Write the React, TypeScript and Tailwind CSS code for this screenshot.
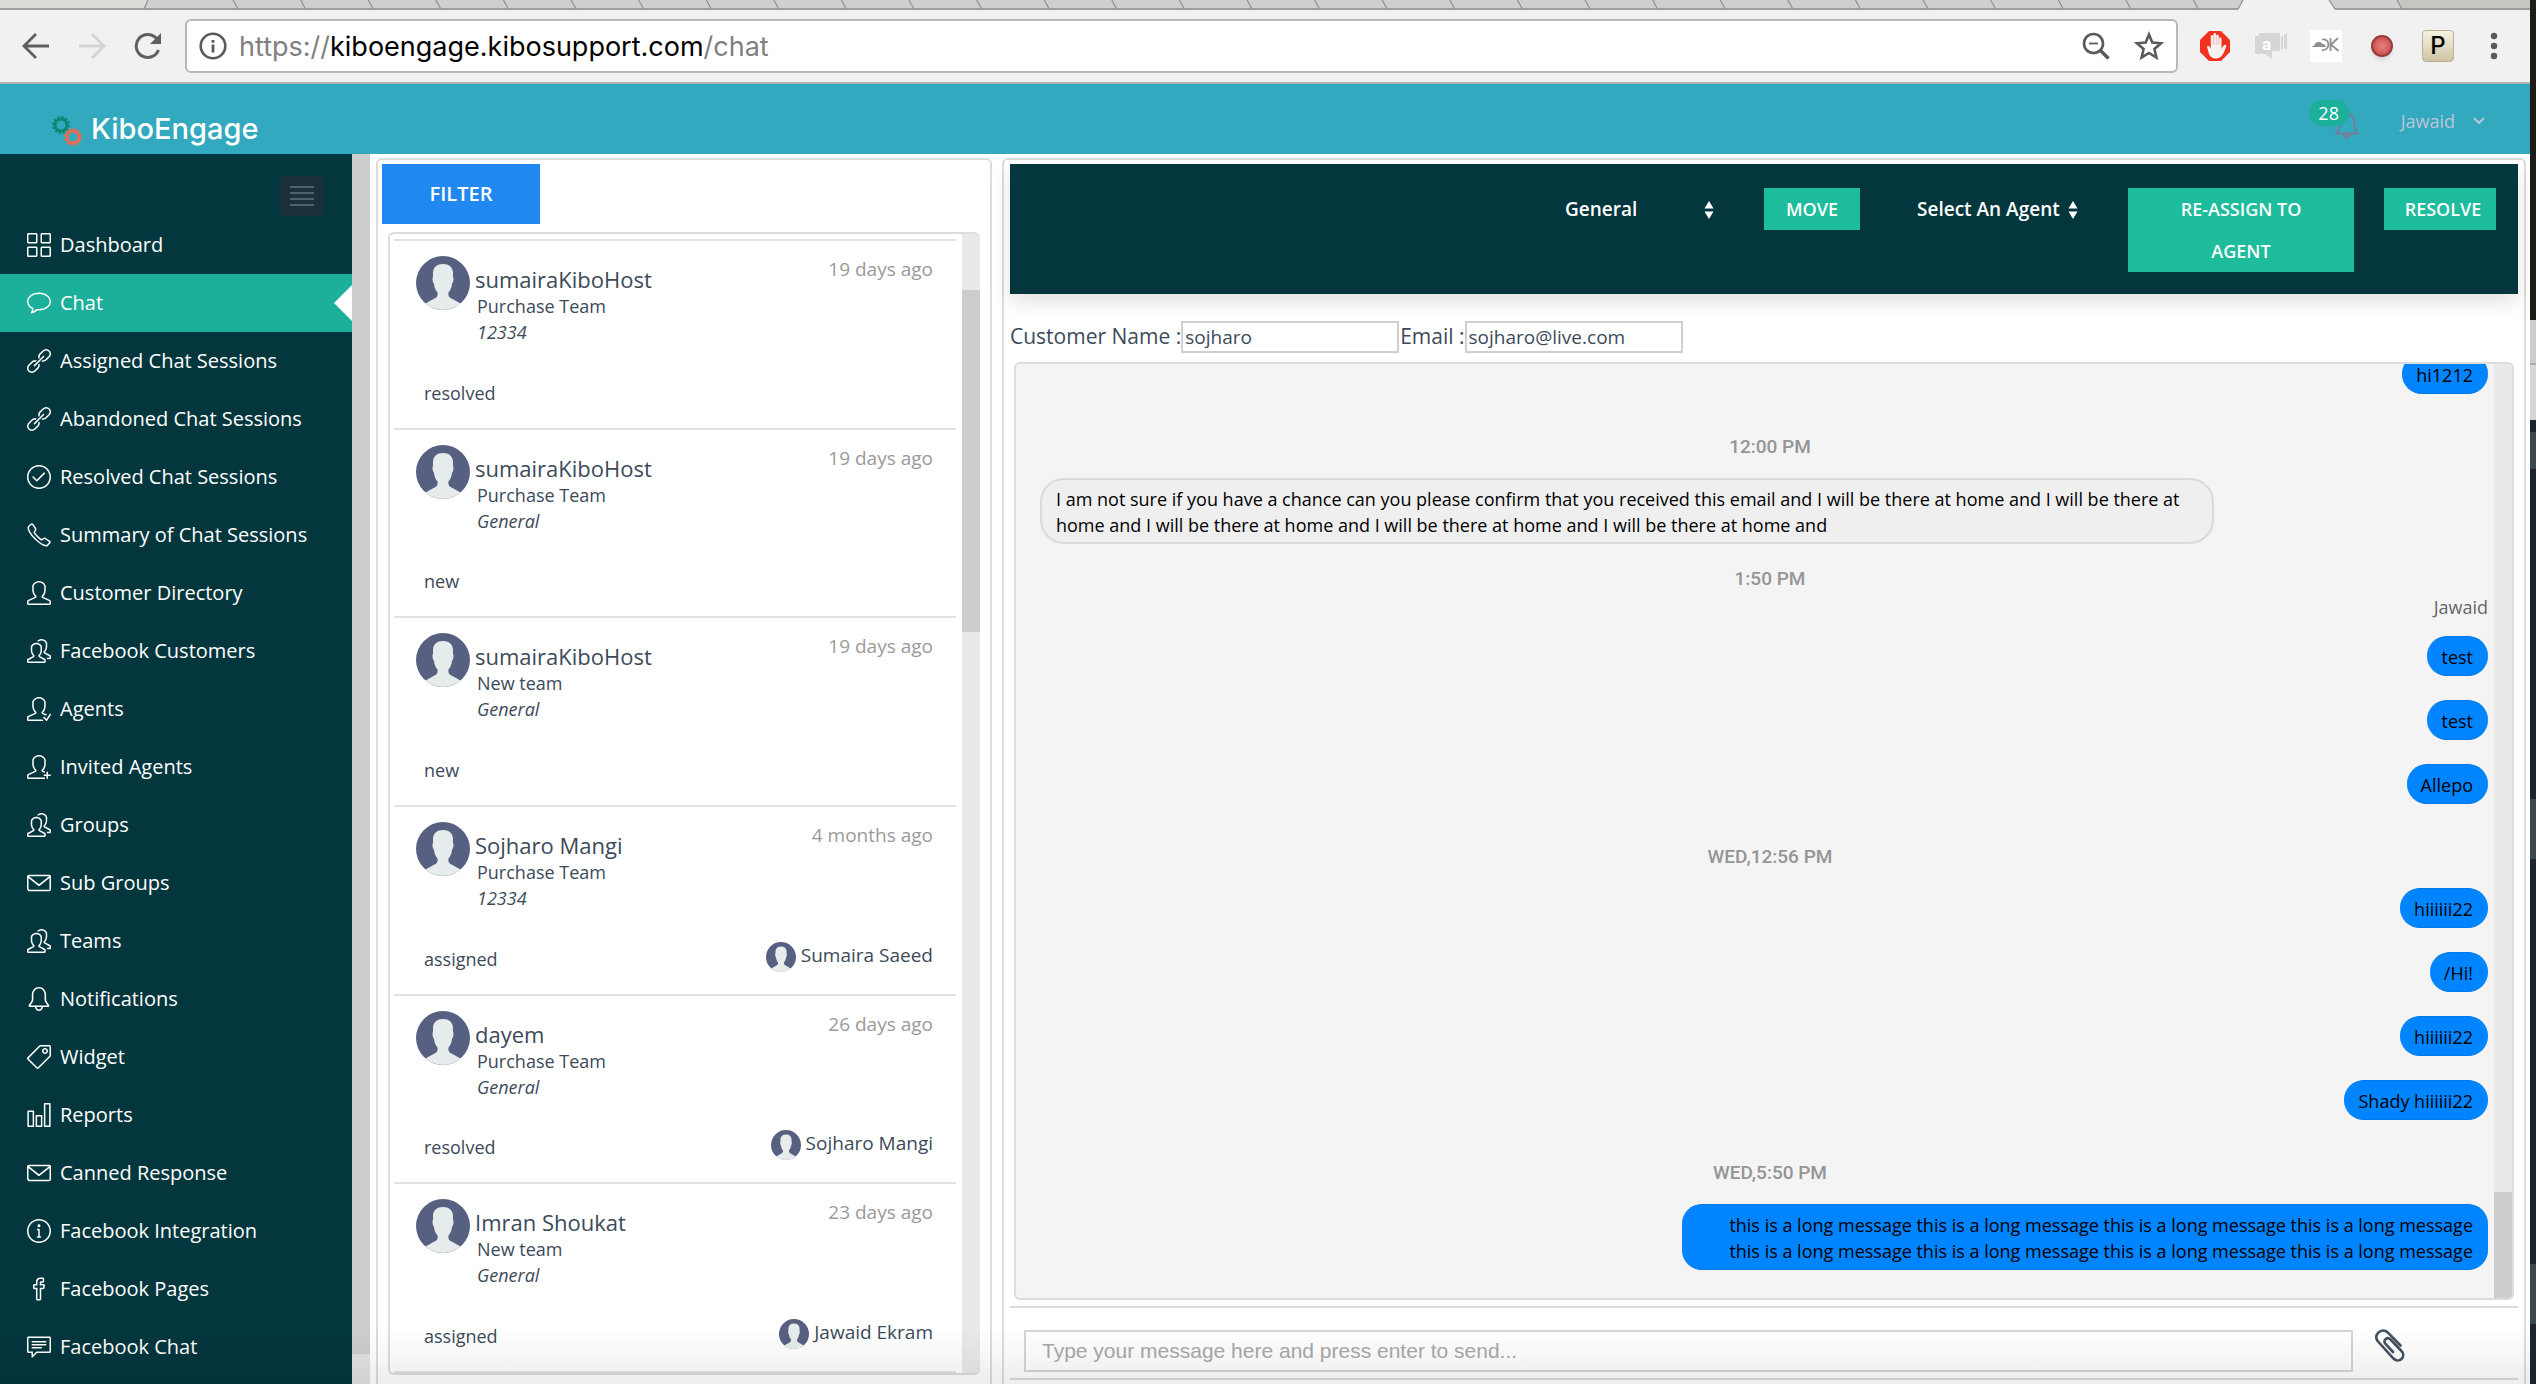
import React from "react";
import {
  SlGrid, SlBubble, SlLink, SlCheck, SlPhone, SlUser, SlPeople, SlUserFollowing, SlUserFollow,
  SlEnvolope, SlBell, SlTag, SlChart, SlInfo, SlSocialFacebook, SlSpeech,
} from "react-icons/sl";
import type { IconType } from "react-icons";

const NAV: [string, IconType][] = [
  ["Dashboard", SlGrid],
  ["Chat", SlBubble],
  ["Assigned Chat Sessions", SlLink],
  ["Abandoned Chat Sessions", SlLink],
  ["Resolved Chat Sessions", SlCheck],
  ["Summary of Chat Sessions", SlPhone],
  ["Customer Directory", SlUser],
  ["Facebook Customers", SlPeople],
  ["Agents", SlUserFollowing],
  ["Invited Agents", SlUserFollow],
  ["Groups", SlPeople],
  ["Sub Groups", SlEnvolope],
  ["Teams", SlPeople],
  ["Notifications", SlBell],
  ["Widget", SlTag],
  ["Reports", SlChart],
  ["Canned Response", SlEnvolope],
  ["Facebook Integration", SlInfo],
  ["Facebook Pages", SlSocialFacebook],
  ["Facebook Chat", SlSpeech],
];

type Session = { name: string; team: string; channel: string; status: string; ago: string; agent?: string };
const SESSIONS: Session[] = [
  { name: "sumairaKiboHost", team: "Purchase Team", channel: "12334", status: "resolved", ago: "19 days ago" },
  { name: "sumairaKiboHost", team: "Purchase Team", channel: "General", status: "new", ago: "19 days ago" },
  { name: "sumairaKiboHost", team: "New team", channel: "General", status: "new", ago: "19 days ago" },
  { name: "Sojharo Mangi", team: "Purchase Team", channel: "12334", status: "assigned", ago: "4 months ago", agent: "Sumaira Saeed" },
  { name: "dayem", team: "Purchase Team", channel: "General", status: "resolved", ago: "26 days ago", agent: "Sojharo Mangi" },
  { name: "Imran Shoukat", team: "New team", channel: "General", status: "assigned", ago: "23 days ago", agent: "Jawaid Ekram" },
];

function TabStrip() {
  const tabs = Array.from({ length: 30 }, (_, i) => 233 + i * 67.6);
  return (
    <svg className="block h-[10px] w-full" viewBox="0 0 2530 10" preserveAspectRatio="none" aria-hidden="true">
      <rect width="2530" height="10" fill="#cfcfcf" />
      <path d="M0 0H148L144 10H0Z" fill="#dcdcd9" />
      <path d="M2397 0H2530V10H2402Z" fill="#c6c6c3" />
      <path d="M0 9H2238M2335 9H2530" stroke="#8f8f8f" strokeWidth="1.5" />
      <path d="M2238 10L2243 0H2329L2335 10Z" fill="#f1f1f1" />
      <g stroke="#8f8f8f" strokeWidth="1.2" fill="none">
        <path d="M148 0L144 9M2243 0L2238 9M2329 0L2335 9M2397 0L2402 9" />
        {tabs.map((x) => (
          <path key={x} d={`M${x} 0l5 9`} />
        ))}
      </g>
    </svg>
  );
}

function Toolbar() {
  return (
    <div className="flex h-[74px] shrink-0 items-center border-b-2 border-[#b4b4b4] bg-[#f1f1f1] pr-8 pl-[22px]">
      <button aria-label="Back" className="mr-7">
        <svg width="28" height="28" viewBox="0 0 28 28" fill="none" stroke="#5f5f5f" strokeWidth="2.8">
          <path d="M27 14H3M14 2L2 14L14 26" />
        </svg>
      </button>
      <button aria-label="Forward" className="mr-7">
        <svg width="28" height="28" viewBox="0 0 28 28" fill="none" stroke="#d3d3d3" strokeWidth="2.8">
          <path d="M1 14H25M14 2L26 14L14 26" />
        </svg>
      </button>
      <button aria-label="Reload" className="mr-[23px]">
        <svg width="28" height="28" viewBox="0 0 28 28" fill="none" stroke="#5f5f5f" strokeWidth="3">
          <path d="M24.500 18A11.500 11.500 0 1 1 22.500 6.500" />
          <path d="M27 1V12H16Z" fill="#5f5f5f" stroke="none" />
        </svg>
      </button>
      <div className="flex h-[54px] flex-1 items-center rounded-[6px] border-2 border-[#b8b8b8] bg-white pl-3 pr-3">
        <svg className="mr-3" width="28" height="28" viewBox="0 0 28 28" fill="none" stroke="#5a5a5a" aria-hidden="true">
          <circle cx="14" cy="14" r="12.300" strokeWidth="2.600" />
          <path d="M14 12.500V20.500M14 8V10.800" strokeWidth="2.800" />
        </svg>
        <div className="flex-1 pt-[2px] font-['Inter',sans-serif] text-[27px] text-[#7f7f7f]">
          https://<span className="text-black">kiboengage.kibosupport.com</span>/chat
        </div>
        <svg className="mr-6" width="28" height="28" viewBox="0 0 28 28" fill="none" stroke="#5a5a5a" strokeWidth="2.600" aria-label="Zoom out">
          <circle cx="11.500" cy="11.500" r="9.500" />
          <path d="M7 11.500H16" strokeWidth="1.800" />
          <path d="M18 18L26.500 26.500" strokeWidth="3.400" />
        </svg>
        <svg width="30" height="30" viewBox="0 0 30 30" fill="none" stroke="#5a5a5a" strokeWidth="2.600" aria-label="Bookmark">
          <path d="M15 3.500L18.300 11.600L27 12.300L20.400 18L22.400 26.500L15 22L7.600 26.500L9.600 18L3 12.300L11.700 11.600Z" />
        </svg>
      </div>
      <svg className="ml-[22px]" width="30" height="30" viewBox="0 0 30 30" aria-label="Ad blocker">
        <path d="M9 0H21L30 9V21L21 30H9L0 21V9Z" fill="#f0321e" />
        <path d="M7 15.500c1-1 2.300-.4 3 .8l.8 1.600V5.500c0-2 2.500-2 2.600 0V3.700c0-2.200 2.800-2.200 2.800 0v1.300c.2-1.800 2.700-1.700 2.700.3v2.300c.3-1.600 2.600-1.500 2.600.4V18c1-2.200 2-4 3.400-4.300 1.200-.1 1.600.9 1.300 1.800-1 3-2.300 6.500-4.200 9-1.700 2.300-3.600 3-6 3-4.500 0-6.300-2.500-7.300-5.500z" fill="#f6f2f0" />
        <path d="M13.400 5.500V14M16.200 4.500V14M18.900 6V14" stroke="#e9a39b" strokeWidth=".7" />
      </svg>
      <svg className="ml-6" width="34" height="28" viewBox="0 0 34 28" fill="#d6d6d6" aria-label="Video chat">
        <path d="M5 1H26V19H18V27L11 22H1V4H5Z" />
        <path d="M27 5l2-2v15l-2-2zM30 3l3-2v17l-3-2z" />
        <text x="8" y="18" fontSize="17" fontWeight="700" fontFamily="Roboto, sans-serif" fill="#fff">a</text>
      </svg>
      <span className="ml-[22px] flex h-8 w-8 items-center bg-white" aria-label="DK">
        <svg width="32" height="32" viewBox="0 0 32 32" fill="none" stroke="#8f8f8f" strokeWidth="1.800" aria-hidden="true">
          <path d="M1 17c2-1 3-1 4-3 2-3 6-3 7 0 2-1 3 1 4 3z" fill="#8f8f8f" stroke="none" />
          <path d="M12 9.500c8-2 9 11.500 0 10.500M20.500 8V21M28 8L21 14.500L28.500 21" />
        </svg>
      </span>
      <span className="ml-[29px] h-[22px] w-[22px] rounded-full border-2 border-[#9a3a3a] bg-radial from-[#e88080] to-[#c04040] shadow-md" aria-label="Record" />
      <span className="ml-[29px] flex h-8 w-8 items-center justify-center rounded-[4px] border border-[#b9b196] bg-linear-to-b from-[#f7f2e2] to-[#cfc5a5] font-['Inter',sans-serif] text-2xl font-medium text-black">
        P
      </span>
      <button aria-label="Menu" className="ml-9">
        <svg width="8" height="28" viewBox="0 0 8 28" fill="#5a5a5a">
          <circle cx="4" cy="4" r="3.200" />
          <circle cx="4" cy="14" r="3.200" />
          <circle cx="4" cy="24" r="3.200" />
        </svg>
      </button>
    </div>
  );
}

function Gear({ cx, cy, color }: { cx: number; cy: number; color: string }) {
  return (
    <g fill="none" stroke={color}>
      <circle cx={cx} cy={cy} r="6" strokeWidth="3" />
      <circle cx={cx} cy={cy} r="8" strokeWidth="2" strokeDasharray="2.200 2" />
    </g>
  );
}

function AppHeader() {
  return (
    <header className="flex h-[70px] shrink-0 items-end bg-[#32a9be] pl-[50px] pr-[44px]">
      <svg className="mb-[7px] mr-[7px]" width="34" height="34" viewBox="0 0 34 34" aria-hidden="true">
        <Gear cx={11} cy={12} color="#0f8676" />
        <Gear cx={23} cy={24} color="#ec6b56" />
      </svg>
      <h1 className="mb-[7px] font-['Inter',sans-serif] text-[29px] leading-9 font-medium text-white">KiboEngage</h1>
      <div className="relative mb-[16px] ml-auto flex h-[26px] w-[50px] justify-end">
        <svg width="24" height="26" viewBox="0 0 24 26" fill="none" stroke="#777d97" strokeWidth="2" aria-hidden="true">
          <path d="M1 21.500H23C19.500 19 19.500 15 19 10C18.500 4 15.500 1.500 12 1.500S5.500 4 5 10C4.500 15 4.500 19 1 21.500Z" />
          <path d="M8 22a4 4 0 0 0 8 0Z" fill="#777d97" stroke="none" />
        </svg>
        <span className="absolute -top-3 left-0 h-[26px] w-10 rounded-[13px] bg-[#1caf9a] text-center text-lg leading-[26px] text-white">28</span>
      </div>
      <button className="mb-[20px] ml-[42px] flex items-center text-lg leading-[26px] text-[#bcc5d8]">
        Jawaid
        <svg className="ml-[17px]" width="14" height="10" viewBox="0 0 14 10" fill="none" stroke="#bcc5d8" strokeWidth="2">
          <path d="M2 2L7 7L12 2" />
        </svg>
      </button>
    </header>
  );
}

function Sidebar() {
  return (
    <nav className="flex w-[352px] shrink-0 flex-col overflow-hidden bg-[#04363d] pt-[22px]">
      <button aria-label="Toggle sidebar" className="mr-7 flex h-10 w-11 shrink-0 items-center justify-center self-end rounded-md bg-[#1c303c]">
        <svg width="24" height="22" viewBox="0 0 24 22" stroke="#50626c" strokeWidth="2">
          <path d="M0 2H24M0 8H24M0 14H24M0 20H24" />
        </svg>
      </button>
      {NAV.map(([label, Icon]) => {
        const active = label === "Chat";
        return (
          <a
            key={label}
            href={"#" + label}
            className={
              "relative flex h-[58px] shrink-0 items-center gap-[9px] pl-[27px] text-xl text-white " +
              (active ? "bg-[#1caf9a]" : "")
            }
          >
            <Icon className="h-6 w-6" aria-hidden="true" />
            {label}
            {active && (
              <svg className="absolute top-[11px] right-0" width="18" height="36" viewBox="0 0 18 36" fill="#fff" aria-hidden="true">
                <path d="M18 0V36L0 18Z" />
              </svg>
            )}
          </a>
        );
      })}
    </nav>
  );
}

function Avatar({ className }: { className: string }) {
  return (
    <svg className={className} viewBox="0 0 54 54" aria-hidden="true">
      <circle cx="27" cy="27" r="27" fill="#576080" />
      <path
        d="M27 8c-6 0-9.500 3-10 8.500 0 2.500.3 4-.5 6 0 2.500.5 4 1.500 5.500.5 4 1.500 6 3.500 8.500.6 3.500-.8 5-3.500 6.300L9.500 47.500A27 27 0 0 0 44.500 47.500L36 42.800c-2.700-1.300-4.100-2.800-3.500-6.300 2-2.500 3-4.500 3.500-8.500 1-1.500 1.500-3 1.500-5.500-.8-2-.5-3.500-.5-6C36.500 11 33 8 27 8Z"
        fill="#e6ecec"
      />
    </svg>
  );
}

function SessionCard({ s }: { s: Session }) {
  return (
    <li className="flex flex-1 flex-col border-b-2 border-[#e2e2e2] pt-[15px] pr-[23px] pb-[22px] pl-[22px] text-lg leading-[26px]">
      <div className="flex">
        <Avatar className="mr-[5px] h-[54px] w-[54px]" />
        <div className="flex-1 pt-[9px]">
          <h2 className="text-[22px] leading-[28px]">{s.name}</h2>
          <p className="pl-[2px]">{s.team}</p>
          <p className="pl-[2px] italic">{s.channel}</p>
        </div>
        <span className="text-[19px] text-[#9a9a9a]">{s.ago}</span>
      </div>
      <div className="mt-auto flex h-[30px] items-end justify-between pl-2">
        <span>{s.status}</span>
        {s.agent && (
          <span className="flex items-start gap-[5px] text-[19px]">
            <Avatar className="h-[30px] w-[30px]" />
            {s.agent}
          </span>
        )}
      </div>
    </li>
  );
}

function SessionList() {
  return (
    <section className="ml-[6px] flex w-[616px] shrink-0 flex-col rounded-t-md border-2 border-b-0 border-[#dcdcdc] p-1 pb-[9px]">
      <button className="h-[60px] w-[158px] shrink-0 bg-[#2088f0] text-xl font-semibold text-white">FILTER</button>
      <div className="mx-[6px] mt-2 flex min-h-0 flex-1 rounded-md border-2 border-r-0 border-[#dcdcdc]">
        <ul className="flex flex-1 flex-col px-1">
          <li className="h-[7px] shrink-0 border-b-2 border-[#e2e2e2]" />
          {SESSIONS.map((s, i) => (
            <SessionCard key={i} s={s} />
          ))}
        </ul>
        <div className="ml-[2px] w-[18px] bg-[#e9e9e9] pt-[56px]">
          <div className="h-[342px] bg-[#cdcdcd]" />
        </div>
      </div>
    </section>
  );
}

function HeaderSelect({ label, value, className }: { label: string; value: string; className: string }) {
  return (
    <div className={"relative h-[42px] " + className}>
      <select aria-label={label} className="h-full w-full appearance-none bg-transparent text-[19px] font-semibold text-white">
        <option>{value}</option>
      </select>
      <svg className="pointer-events-none absolute top-3 right-0" width="10" height="20" viewBox="0 0 10 20" fill="#fff" aria-hidden="true">
        <path d="M5 1L9.500 8.500H.5ZM5 19L9.500 11.500H.5Z" />
      </svg>
    </div>
  );
}

const GREEN_BUTTON = "bg-[#1dbc9c] text-lg leading-[42px] font-semibold text-white ";

function Stamp({ children, className }: { children: string; className: string }) {
  return <li className={"pl-3 text-center font-['Roboto',sans-serif] text-[19px] leading-[26px] font-medium text-[#959595] " + className}>{children}</li>;
}

function Outgoing({ children, className = "mt-6" }: { children: string; className?: string }) {
  return (
    <li
      className={
        "max-w-[806px] self-end rounded-[20px] border-y border-[#0078e8] bg-[#0084ff] pt-[7px] pr-[15px] pb-[5px] pl-[14px] text-right text-lg leading-[26px] text-black " +
        className
      }
    >
      {children}
    </li>
  );
}

function Conversation() {
  return (
    <section className="ml-[10px] mr-1 flex min-w-0 flex-1 flex-col rounded-t-md border-2 border-b-0 border-[#dcdcdc] px-[6px] pt-1 pb-1">
      <div className="flex h-[130px] shrink-0 items-start justify-end bg-[#04363d] pt-6 pr-[22px] shadow-[0_8px_20px_rgba(0,0,0,0.12)]">
        <HeaderSelect label="Channel" value="General" className="w-[149px]" />
        <button className={GREEN_BUTTON + "ml-[50px] w-24"}>MOVE</button>
        <HeaderSelect label="Agent" value="Select An Agent" className="ml-[57px] w-[161px]" />
        <button className={GREEN_BUTTON + "ml-[50px] w-[226px] px-[50px]"}>RE-ASSIGN TO AGENT</button>
        <button className={GREEN_BUTTON + "ml-[30px] w-28 pl-[6px]"}>RESOLVE</button>
      </div>
      <div className="mt-[27px] flex h-8 shrink-0 items-center text-[21px]">
        <label htmlFor="customer-name">Customer Name :</label>
        <input id="customer-name" className="h-8 w-[218px] border-2 border-[#cfcfcf] px-[2px] text-[19px]" defaultValue="sojharo" />
        <label htmlFor="customer-email" className="pl-[1px]">Email :</label>
        <input id="customer-email" className="h-8 w-[218px] border-2 border-[#cfcfcf] px-[2px] text-[19px]" defaultValue="sojharo@live.com" />
      </div>
      <div className="mx-1 mt-[9px] flex min-h-0 flex-1 overflow-hidden rounded-md border-2 border-[#dcdcdc] bg-[#f4f4f4]">
        <ul className="flex flex-1 flex-col justify-end pr-[6px] pb-7 pl-6">
          <Outgoing>hi1212</Outgoing>
          <Stamp className="mt-10">12:00 PM</Stamp>
          <li className="mt-[18px] max-w-[1174px] self-start rounded-[24px] border-2 border-[#dadada] bg-[#efefef] px-[14px] pt-[6px] pb-1 text-lg leading-[26px] text-black">
            I am not sure if you have a chance can you please confirm that you received this email and I will be there at home and I will
            be there at home and I will be there at home and I will be there at home and I will be there at home and
          </li>
          <Stamp className="mt-[22px]">1:50 PM</Stamp>
          <li className="mt-[2px] text-right text-lg leading-[26px] text-[#666]">Jawaid</li>
          <Outgoing className="mt-4">test</Outgoing>
          <Outgoing>test</Outgoing>
          <Outgoing>Allepo</Outgoing>
          <Stamp className="mt-10">WED,12:56 PM</Stamp>
          <Outgoing className="mt-[18px]">hiiiiii22</Outgoing>
          <Outgoing>/Hi!</Outgoing>
          <Outgoing>hiiiiii22</Outgoing>
          <Outgoing>Shady hiiiiii22</Outgoing>
          <Stamp className="mt-10">WED,5:50 PM</Stamp>
          <Outgoing className="mt-[18px]">
            this is a long message this is a long message this is a long message this is a long message this is a long message this is a long message this is a long message this is a long message
          </Outgoing>
        </ul>
        <div className="flex w-[18px] flex-col justify-end bg-[#e9e9e9]">
          <div className="h-[106px] bg-[#cdcdcd]" />
        </div>
      </div>
      <form className="mt-[6px] flex h-[74px] shrink-0 items-end border-y-2 border-[#dadadf] pb-[6px] pl-[14px] pr-[113px]">
        <input
          aria-label="Message"
          className="h-[42px] flex-1 border-2 border-[#d6d6d6] bg-transparent px-4 font-['Liberation_Sans',sans-serif] text-[21px] placeholder:text-[#a9a9a9]"
          placeholder="Type your message here and press enter to send..."
        />
        <button type="button" aria-label="Attach a file" className="mb-[10px] ml-[22px]">
          <svg width="30" height="33" viewBox="0 0 30 33" fill="none" stroke="#44515f" strokeWidth="2.600" strokeLinecap="round">
            <path d="M25.500 16.500L13 3.700C10 .8 6 1 3.300 3.700S.8 10 3.500 13L18.500 29.500C21 32 24.500 32 26.500 30S29 24.500 26.500 22L15.500 10.500C14 9 12 9 10.500 10.300S9.200 13.500 10.500 15L18 23" />
          </svg>
        </button>
      </form>
    </section>
  );
}

function NeighbourWindow() {
  return (
    <div className="flex w-[6px] shrink-0 flex-col bg-[#1e2530]" aria-hidden="true">
      <div className="h-[320px] bg-[#1b1b18]" />
      <div className="h-[45px] border-b-2 border-[#aaa] bg-[#cccccc]" />
      <div className="h-[55px] bg-[#d6d6d6]" />
      <div className="mt-3 h-[37px] bg-[#3b4850]" />
      <div className="mt-[330px] h-[60px] bg-[#3b4850]" />
      <div className="mt-[405px] h-[60px] bg-[#3b4850]" />
    </div>
  );
}

export default function App() {
  return (
    <div className="relative flex h-screen overflow-hidden bg-white font-['Open_Sans',sans-serif] text-[#3c4a59]">
      <div className="flex min-w-0 flex-1 flex-col">
        <TabStrip />
        <Toolbar />
        <AppHeader />
        <div className="flex min-h-0 flex-1">
          <Sidebar />
          <div className="w-[18px] shrink-0 bg-[#e2e2e2] pb-[30px]">
            <div className="h-full bg-[#cdcdcd]" />
          </div>
          <main className="flex min-w-0 flex-1 pt-1">
            <SessionList />
            <Conversation />
          </main>
        </div>
      </div>
      <NeighbourWindow />
      <div className="pointer-events-none absolute inset-x-0 bottom-0 h-14 bg-linear-to-b from-transparent to-black/7" />
    </div>
  );
}
